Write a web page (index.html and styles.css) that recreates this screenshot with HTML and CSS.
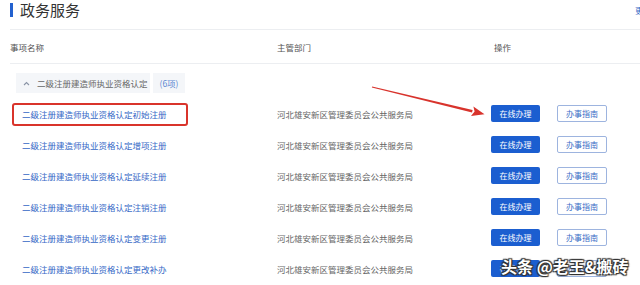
FILE: index.html
```html
<!DOCTYPE html>
<html lang="zh-CN">
<head>
<meta charset="utf-8">
<title>政务服务</title>
<link rel="stylesheet" href="styles.css">
</head>
<body>
<div class="page">
  <div class="title-row">
    <h1 class="title"><span class="title-bar"></span>政务服务</h1>
    <a class="more">更多</a>
  </div>
  <div class="grid head">
    <div class="c1">事项名称</div>
    <div class="c2">主管部门</div>
    <div class="c3 op-head">操作</div>
  </div>
  <div class="group">
    <div class="group-name">
      <svg class="caret" width="7" height="5" viewBox="0 0 7 5"><path d="M1 4 L3.5 1.5 L6 4" fill="none" stroke="#8a94a6" stroke-width="1.1"/></svg>
      <span>二级注册建造师执业资格认定</span>
    </div>
    <div class="group-count">(6项)</div>
  </div>
  <div class="rows">
    <div class="grid row">
      <div class="c1"><a class="link marked">二级注册建造师执业资格认定初始注册</a></div>
      <div class="c2 dept">河北雄安新区管理委员会公共服务局</div>
      <div class="c3 ops"><span class="btn primary">在线办理</span><span class="btn ghost">办事指南</span></div>
    </div>
    <div class="grid row">
      <div class="c1"><a class="link">二级注册建造师执业资格认定增项注册</a></div>
      <div class="c2 dept">河北雄安新区管理委员会公共服务局</div>
      <div class="c3 ops"><span class="btn primary">在线办理</span><span class="btn ghost">办事指南</span></div>
    </div>
    <div class="grid row">
      <div class="c1"><a class="link">二级注册建造师执业资格认定延续注册</a></div>
      <div class="c2 dept">河北雄安新区管理委员会公共服务局</div>
      <div class="c3 ops"><span class="btn primary">在线办理</span><span class="btn ghost">办事指南</span></div>
    </div>
    <div class="grid row">
      <div class="c1"><a class="link">二级注册建造师执业资格认定注销注册</a></div>
      <div class="c2 dept">河北雄安新区管理委员会公共服务局</div>
      <div class="c3 ops"><span class="btn primary">在线办理</span><span class="btn ghost">办事指南</span></div>
    </div>
    <div class="grid row">
      <div class="c1"><a class="link">二级注册建造师执业资格认定变更注册</a></div>
      <div class="c2 dept">河北雄安新区管理委员会公共服务局</div>
      <div class="c3 ops"><span class="btn primary">在线办理</span><span class="btn ghost">办事指南</span></div>
    </div>
    <div class="grid row">
      <div class="c1"><a class="link">二级注册建造师执业资格认定更改补办</a></div>
      <div class="c2 dept">河北雄安新区管理委员会公共服务局</div>
      <div class="c3 ops"><span class="btn primary">在线办理</span><span class="btn ghost">办事指南</span></div>
    </div>
  </div>
  <svg class="arrow" width="640" height="285" viewBox="0 0 640 285">
    <polygon points="371.9,87.4 372.1,86.6 472.6,110.0 472.0,112.4" fill="#d8332c"/>
    <polygon points="484.5,114.2 471.0,116.0 474.6,111.4 473.4,106.6" fill="#d8332c"/>
  </svg>
  <div class="watermark">头条 @老王&amp;搬砖</div>
</div>
</body>
</html>
```

FILE: styles.css
```css
html, body {
  margin: 0;
  padding: 0;
  overflow: hidden;
  background: #fff;
}
body {
  width: 640px;
  height: 285px;
  font-family: "Noto Sans CJK SC", "Noto Sans", sans-serif;
  font-size: 8.5px;
  color: #555;
}
.page {
  position: relative;
  width: 652px;
  padding-left: 10px;
  box-sizing: border-box;
}
.title-row {
  display: flex;
  justify-content: space-between;
  align-items: center;
  height: 30px;
  box-sizing: border-box;
  padding: 2px 0 12px 0;
  border-bottom: 1px solid #eceef1;
}
.title {
  margin: 0;
  display: flex;
  align-items: center;
  font-size: 15px;
  line-height: 16px;
  font-weight: 400;
  color: #333;
}
.title-bar {
  display: inline-block;
  width: 3px;
  height: 14px;
  background: #2361cf;
  margin-right: 7px;
}
.more {
  color: #3a6cc6;
  font-size: 8.5px;
}
.grid {
  display: grid;
  grid-template-columns: 267px 214px 1fr;
  align-items: center;
}
.head {
  height: 34px;
  box-sizing: border-box;
  border-bottom: 1px solid #eceef1;
  color: #555;
}
.op-head {
  padding-left: 3px;
}
.group {
  display: flex;
  gap: 3px;
  margin: 9px 0 5px 6px;
  height: 20px;
}
.group-name, .group-count {
  display: flex;
  align-items: center;
  background: #f4f6f9;
  color: #666;
}
.group-name {
  padding: 0 2px 0 7px;
  gap: 7px;
}
.group-count {
  padding: 0 7px;
  color: #5c87d2;
}
.caret {
  display: block;
}
.row {
  height: 31px;
}
.row .c1 {
  position: relative;
  padding-left: 12px;
  height: 100%;
  display: flex;
  align-items: center;
}
.link {
  color: #3467c6;
}
.marked::after {
  content: "";
  position: absolute;
  left: 2px;
  top: 5px;
  width: 172px;
  height: 19px;
  border: 2px solid #d9342b;
  border-radius: 3px;
}
.dept {
  color: #666;
}
.ops {
  display: flex;
  gap: 17px;
}
.btn {
  display: flex;
  align-items: center;
  justify-content: center;
  height: 17px;
  box-sizing: border-box;
  border-radius: 2px;
  font-size: 8px;
}
.primary {
  width: 49px;
  background: #1b5ed0;
  color: #fff;
}
.ghost {
  width: 50px;
  background: #fff;
  border: 1px solid #9db4df;
  color: #3b6dc6;
}
.arrow {
  position: absolute;
  left: 0;
  top: 0;
  pointer-events: none;
}
.watermark {
  position: absolute;
  left: 501px;
  top: 256px;
  font-size: 16px;
  line-height: 20px;
  font-weight: 700;
  color: #fff;
  white-space: nowrap;
  text-shadow: 0 0 1px #222, 1px 1px 1px #333, -1px -1px 1px #333, 1px -1px 1px #333, -1px 1px 1px #333;
}
```
